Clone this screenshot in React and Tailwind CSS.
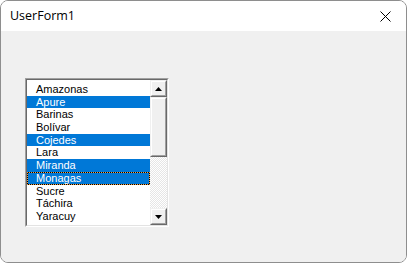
import React from 'react';

const estados = [
  { nombre: 'Amazonas', sel: false },
  { nombre: 'Apure', sel: true },
  { nombre: 'Barinas', sel: false },
  { nombre: 'Bolívar', sel: false },
  { nombre: 'Cojedes', sel: true },
  { nombre: 'Lara', sel: false },
  { nombre: 'Miranda', sel: true },
  { nombre: 'Monagas', sel: true, foco: true },
  { nombre: 'Sucre', sel: false },
  { nombre: 'Táchira', sel: false },
  { nombre: 'Yaracuy', sel: false },
];

// Botón clásico en relieve (estilo Windows 9x)
function Relieve({ className = '', children }) {
  return (
    <div className={`border-t border-l border-t-[#f0f0f0] border-l-[#f0f0f0] border-r border-b border-r-[#696969] border-b-[#696969] ${className}`}>
      <div className="w-full h-full border-t border-l border-t-white border-l-white border-r border-b border-r-[#a0a0a0] border-b-[#a0a0a0] bg-[#f0f0f0] flex items-center justify-center">
        {children}
      </div>
    </div>
  );
}

function Flecha({ abajo }) {
  return (
    <svg width="7" height="4" viewBox="0 0 7 4" className={abajo ? 'rotate-180' : ''}>
      <polygon points="3.5,0 7,4 0,4" fill="#000" />
    </svg>
  );
}

function ListaEstados() {
  return (
    <div className="w-[144px] h-[149px] border-t border-l border-t-[#a0a0a0] border-l-[#a0a0a0] border-r border-b border-r-white border-b-white">
      <div className="w-full h-full border-t border-l border-t-[#696969] border-l-[#696969] border-r border-b border-r-[#e3e3e3] border-b-[#e3e3e3] bg-white flex">
        <div className="flex-1 pt-[3px] overflow-hidden">
          {estados.map((e) => (
            <div
              key={e.nombre}
              className={`relative h-[12.7px] leading-[12.7px] pl-[9px] text-[11px] font-['Liberation_Sans',sans-serif] ${e.sel ? 'bg-[#0078d7] text-white' : 'text-black'}`}
            >
              {e.nombre}
              {e.foco && (
                <div className="absolute inset-0 border border-black">
                  <div className="absolute inset-[-1px] border border-dotted border-[#f5a040]" />
                </div>
              )}
            </div>
          ))}
        </div>
        <div className="w-[17px] flex flex-col">
          <Relieve className="h-[17px]"><Flecha /></Relieve>
          <Relieve className="h-[60px]" />
          <div className="flex-1 bg-[repeating-conic-gradient(#ffffff_0_25%,#e6e6e6_0_50%)] bg-[length:2px_2px]" />
          <Relieve className="h-[17px]"><Flecha abajo /></Relieve>
        </div>
      </div>
    </div>
  );
}

export default function App() {
  return (
    <div className="w-[407px] h-[263px] bg-white">
      <div className="h-full rounded-[8px] border border-[#8e8e8e] overflow-hidden flex flex-col">
        <div className="h-[30px] bg-white flex items-center justify-between pl-[9px] pr-[15px]">
          <span className="text-[12.5px] text-black font-['Open_Sans',sans-serif]">UserForm1</span>
          <svg width="11" height="11" viewBox="0 0 11 11">
            <path d="M0.5 0.5 L10.5 10.5 M10.5 0.5 L0.5 10.5" stroke="#000" strokeWidth="1" fill="none" />
          </svg>
        </div>
        <div className="flex-1 bg-[#f0f0f0] pt-[47px] pl-[24px]">
          <ListaEstados />
        </div>
      </div>
    </div>
  );
}
